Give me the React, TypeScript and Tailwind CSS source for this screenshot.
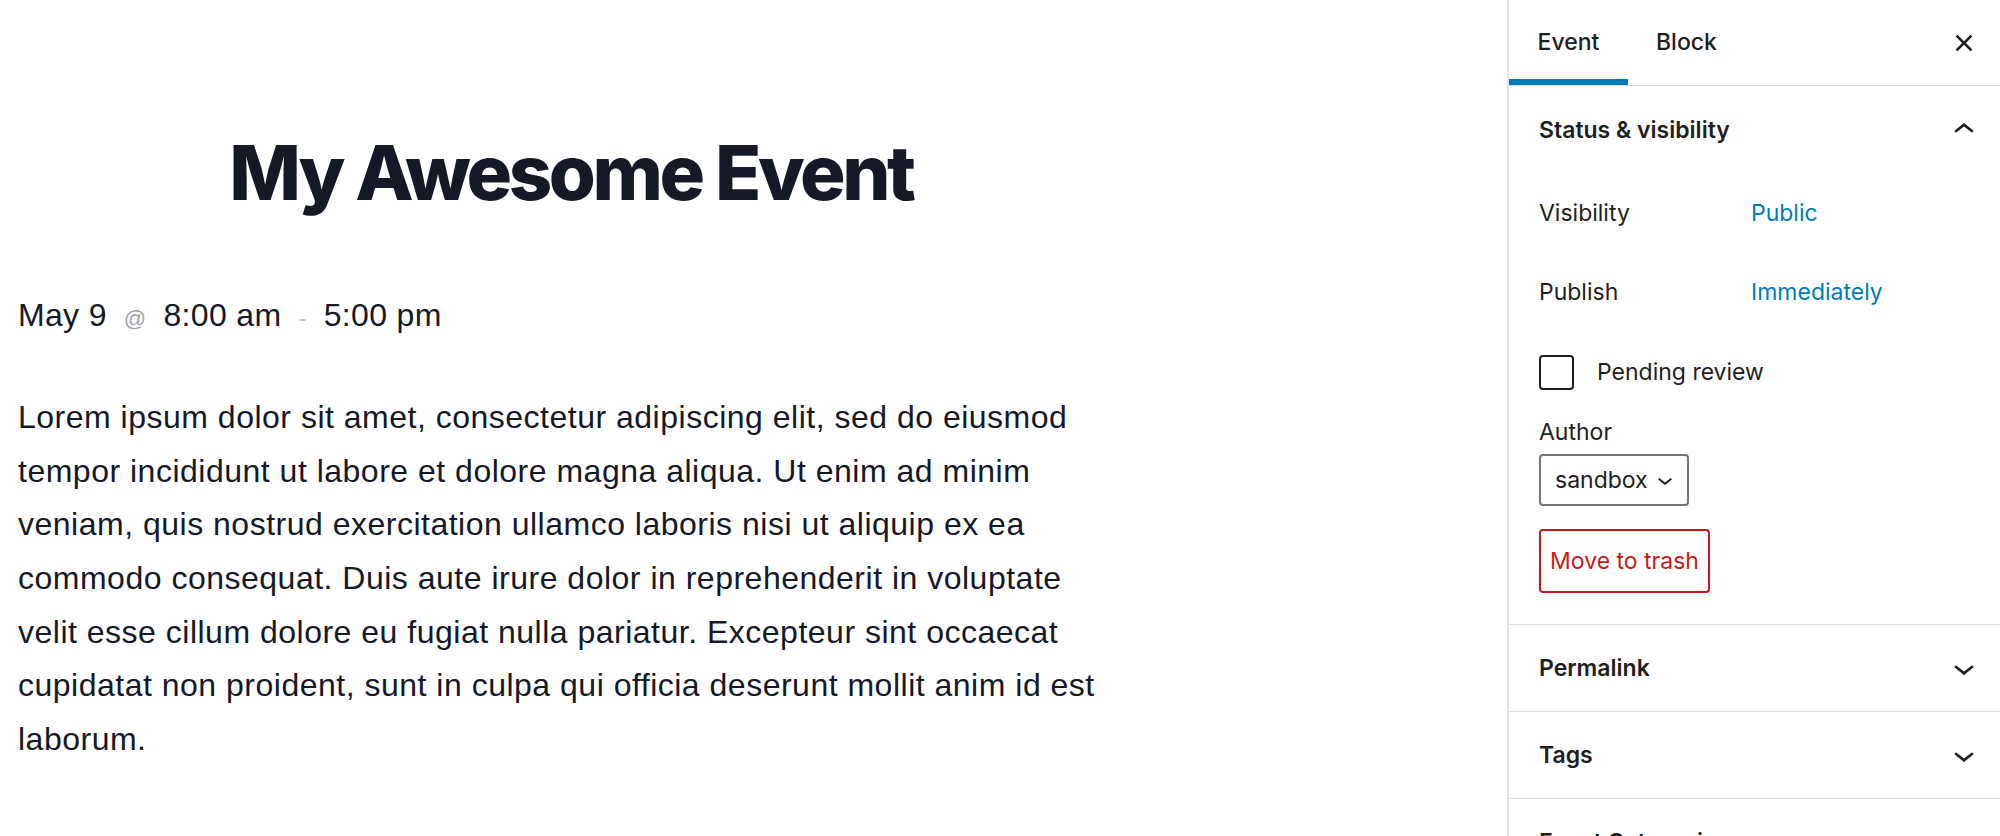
import React from "react";

const sidebarFont = { fontFamily: "Inter, 'Noto Sans', sans-serif" };
const bodyFont = { fontFamily: "'Liberation Sans', Arial, sans-serif", letterSpacing: "0.5px" };

function ChevronUp() {
  return (
    <svg width="42" height="42" viewBox="0 0 24 24" fill="#1e1e1e" aria-hidden>
      <path d="M6.5 12.4L12 8l5.5 4.4-.9 1.2L12 10l-4.6 3.6-1-1.2z" />
    </svg>
  );
}

function ChevronDown({ size = 42 }: { size?: number }) {
  return (
    <svg width={size} height={size} viewBox="0 0 24 24" fill="#1e1e1e" aria-hidden>
      <path d="M17.5 11.6L12 16l-5.5-4.4.9-1.2L12 14l4.6-3.6 1 1.2z" />
    </svg>
  );
}

function CloseIcon() {
  return (
    <svg width="42" height="42" viewBox="0 0 24 24" fill="#1e1e1e" aria-hidden>
      <path d="M12 13.06l3.712 3.713 1.061-1.06L13.061 12l3.712-3.712-1.06-1.06L12 10.938 8.288 7.227l-1.061 1.06L10.939 12l-3.712 3.712 1.06 1.061L12 13.061z" />
    </svg>
  );
}

function CollapsedPanel({ title }: { title: string }) {
  return (
    <div className="flex h-[87px] shrink-0 items-center justify-between border-b border-[#dcdcdc] pl-[30px] pr-[15px]">
      <span className="text-[23px] font-[560] text-[#1e1e1e]">{title}</span>
      <ChevronDown />
    </div>
  );
}

// Paragraph lines as laid out in the editor column
const lines = [
  "Lorem ipsum dolor sit amet, consectetur adipiscing elit, sed do eiusmod",
  "tempor incididunt ut labore et dolore magna aliqua. Ut enim ad minim",
  "veniam, quis nostrud exercitation ullamco laboris nisi ut aliquip ex ea",
  "commodo consequat. Duis aute irure dolor in reprehenderit in voluptate",
  "velit esse cillum dolore eu fugiat nulla pariatur. Excepteur sint occaecat",
  "cupidatat non proident, sunt in culpa qui officia deserunt mollit anim id est",
  "laborum.",
];

export default function App() {
  return (
    <div className="flex h-[836px] w-[2000px] overflow-hidden bg-white">
      {/* Editor canvas */}
      <main className="flex-1 pl-[18px]">
        <div className="w-[1106px]">
          <h1
            className="mt-[127px] text-center text-[76px] font-extrabold leading-[1.2] tracking-[-0.045em] text-[#141827]"
            style={{ fontFamily: "Inter, sans-serif" }}
          >
            My Awesome Event
          </h1>
          <div
            className="mt-[70px] flex h-[54px] items-baseline text-[32px] leading-[54px] text-[#141827]"
            style={{ fontFamily: "'Liberation Sans', Arial, sans-serif", letterSpacing: "0.33px" }}
          >
            <span>May 9</span>
            <span className="mx-[17px] text-[22px] text-[#9fa2a8]">@</span>
            <span>8:00 am</span>
            <span className="mx-[17px] text-[24px] text-[#c4c5c8]">-</span>
            <span>5:00 pm</span>
          </div>
          <p className="mt-[49px] text-[32px] leading-[53.6px] text-[#141827]" style={bodyFont}>
            {lines.map((line, i) => (
              <span key={i} className="block whitespace-nowrap">
                {line}
              </span>
            ))}
          </p>
        </div>
      </main>

      {/* Settings sidebar */}
      <aside
        className="flex w-[493px] shrink-0 flex-col border-l-2 border-[#e4e4e4]"
        style={sidebarFont}
      >
        <div className="flex h-[86px] shrink-0 items-stretch justify-between border-b border-[#dcdcdc]">
          <div className="flex">
            <div className="relative flex w-[119px] items-center justify-center text-[23px] font-medium text-[#1e1e1e]">
              Event
              <div className="absolute bottom-0 left-0 right-0 h-[6px] bg-[#007cba]" />
            </div>
            <div className="flex items-center px-[28px] text-[23px] font-medium text-[#1e1e1e]">
              Block
            </div>
          </div>
          <div className="flex items-center pr-[15px]">
            <CloseIcon />
          </div>
        </div>

        {/* Status & visibility */}
        <section className="shrink-0 border-b border-[#dcdcdc] pl-[30px] pr-[15px] pb-[31px]">
          <div className="flex h-[88px] items-center justify-between">
            <span className="text-[23px] font-[560] text-[#1e1e1e]">Status &amp; visibility</span>
            <ChevronUp />
          </div>
          <div className="flex h-[79px] items-center text-[23px] text-[#1e1e1e]">
            <span className="w-[212px]">Visibility</span>
            <span className="text-[#007cba]">Public</span>
          </div>
          <div className="flex h-[79px] items-center text-[23px] text-[#1e1e1e]">
            <span className="w-[212px]">Publish</span>
            <span className="text-[#007cba]">Immediately</span>
          </div>
          <div className="mt-[23px] flex h-[35px] items-center">
            <div className="h-[35px] w-[35px] rounded-[4px] border-2 border-[#1e1e1e]" />
            <span className="ml-[23px] text-[23px] text-[#1e1e1e]">Pending review</span>
          </div>
          <div className="mt-[27px] text-[23px] leading-[30px] text-[#1e1e1e]">Author</div>
          <div className="mt-[7px] flex h-[52px] w-[150px] items-center rounded-[4px] border-2 border-[#757575] pl-[14px]">
            <span className="text-[23px] text-[#1e1e1e]">sandbox</span>
            <span className="ml-[2px] flex items-center">
              <ChevronDown size={30} />
            </span>
          </div>
          <div className="mt-[23px] flex h-[64px] w-[171px] items-center justify-center rounded-[4px] border-2 border-[#cc1818] text-[23px] text-[#cc1818]">
            Move to trash
          </div>
        </section>

        <CollapsedPanel title="Permalink" />
        <CollapsedPanel title="Tags" />
        <CollapsedPanel title="Event Categories" />
      </aside>
    </div>
  );
}
